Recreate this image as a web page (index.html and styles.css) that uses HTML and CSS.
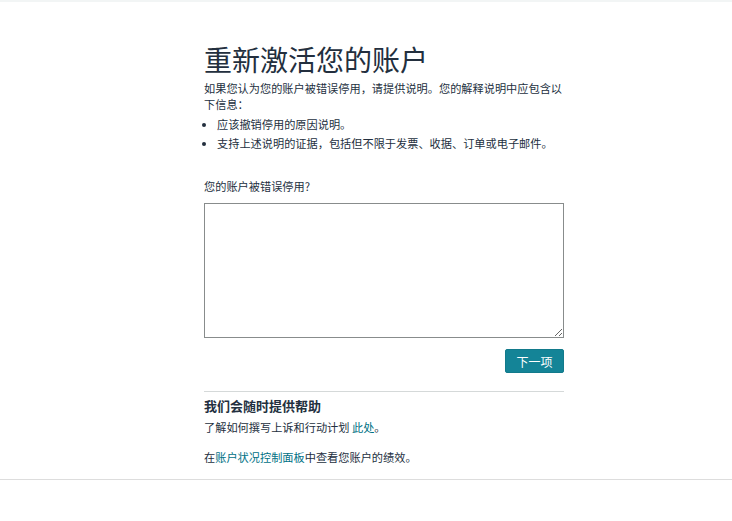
FILE: index.html
```html
<!DOCTYPE html>
<html lang="zh-CN">
<head>
<meta charset="utf-8">
<title>重新激活您的账户</title>
<link rel="stylesheet" href="styles.css">
</head>
<body>
<div class="topbar"></div>
<main class="page">
  <section class="content">
    <h1 class="title">重新激活您的账户</h1>
    <p class="intro">如果您认为您的账户被错误停用，请提供说明。您的解释说明中应包含以下信息：</p>
    <ul class="list">
      <li>应该撤销停用的原因说明。</li>
      <li>支持上述说明的证据，包括但不限于发票、收据、订单或电子邮件。</li>
    </ul>
    <label class="label" for="reason">您的账户被错误停用?</label>
    <textarea id="reason" class="field"></textarea>
    <div class="actions">
      <button class="btn" type="button">下一项</button>
    </div>
    <div class="help">
      <h2 class="help-title">我们会随时提供帮助</h2>
      <p class="help-line">了解如何撰写上诉和行动计划 <a href="#" class="link">此处</a>。</p>
      <p class="help-line second">在<a href="#" class="link">账户状况控制面板</a>中查看您账户的绩效。</p>
    </div>
  </section>
</main>
<div class="footer-line"></div>
</body>
</html>
```
FILE: styles.css
```css
html, body {
  margin: 0;
  padding: 0;
  background: #ffffff;
}
body {
  font-family: "Noto Sans CJK SC", "Noto Sans", "Liberation Sans", sans-serif;
  color: #232f3e;
}
.topbar {
  height: 2px;
  background: #f2f5f5;
}
.page {
  display: flex;
  padding-left: 204px;
}
.content {
  width: 360px;
  display: flex;
  flex-direction: column;
}
.title {
  margin: 36px 0 0 0;
  font-size: 28px;
  font-weight: 400;
  line-height: 42px;
  color: #232f3e;
}
.intro {
  margin: 0;
  font-size: 11.2px;
  line-height: 16px;
}
.list {
  margin: 3px 0 0 0;
  padding: 0 0 0 13px;
  font-size: 11.2px;
  line-height: 19px;
}
.label {
  margin-top: 25px;
  font-size: 11.2px;
  line-height: 16px;
}
.field {
  margin-top: 9px;
  box-sizing: border-box;
  width: 360px;
  height: 135px;
  border: 1px solid #888c8c;
  border-radius: 0;
  padding: 4px;
  font-family: inherit;
  resize: vertical;
}
.actions {
  display: flex;
  justify-content: flex-end;
  margin-top: 11px;
}
.btn {
  width: 59px;
  height: 24px;
  background: #148497;
  color: #ffffff;
  border: 1px solid #127a8b;
  border-radius: 2px;
  font-family: inherit;
  font-size: 12px;
  padding: 0;
}
.help {
  margin-top: 18px;
  border-top: 1px solid #d5d9d9;
  padding-top: 5px;
}
.help-title {
  margin: 0;
  font-size: 13px;
  font-weight: 700;
  line-height: 18px;
}
.help-line {
  margin: 4px 0 0 0;
  font-size: 11.2px;
  line-height: 16px;
}
.help-line.second {
  margin-top: 14px;
}
.link {
  color: #007185;
  text-decoration: none;
}
.footer-line {
  margin-top: 14px;
  height: 1px;
  background: #dddddd;
}
```
